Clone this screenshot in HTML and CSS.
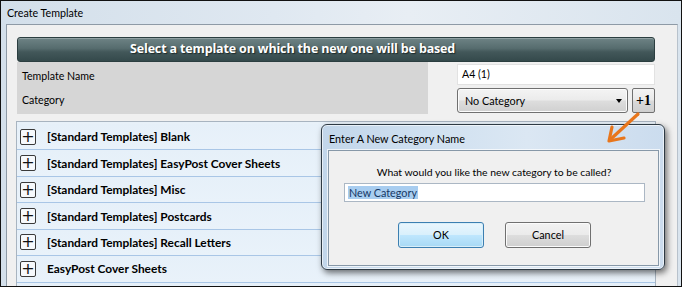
FILE: index.html
```html
<!DOCTYPE html>
<html>
<head>
<meta charset="utf-8">
<link rel="stylesheet" href="styles.css">
</head>
<body>
<div class="window">
  <div class="titlebar">Create Template</div>
  <div class="frame">
    <div class="header">Select a template on which the new one will be based</div>
    <div class="form">
      <div class="labels">
        <div class="label">Template Name</div>
        <div class="label">Category</div>
      </div>
      <div class="fields">
        <div class="input">A4 (1)</div>
        <div class="selrow">
          <div class="select"><span>No Category</span><span class="caret"></span></div>
          <div class="plus1">+1</div>
        </div>
      </div>
    </div>
    <div class="list">
      <div class="row"><span class="box">+</span><span class="name">[Standard Templates] Blank</span></div>
      <div class="row"><span class="box">+</span><span class="name">[Standard Templates] EasyPost Cover Sheets</span></div>
      <div class="row"><span class="box">+</span><span class="name">[Standard Templates] Misc</span></div>
      <div class="row"><span class="box">+</span><span class="name">[Standard Templates] Postcards</span></div>
      <div class="row"><span class="box">+</span><span class="name">[Standard Templates] Recall Letters</span></div>
      <div class="row"><span class="box">+</span><span class="name">EasyPost Cover Sheets</span></div>
      <div class="row"></div>
    </div>
  </div>

  <div class="dialog">
    <div class="dtitle">Enter A New Category Name</div>
    <div class="dpanel">
      <div class="question">What would you like the new category to be called?</div>
      <div class="dinput"><span class="sel">New Category</span></div>
      <div class="buttons">
        <div class="btn ok">OK</div>
        <div class="btn cancel">Cancel</div>
      </div>
    </div>
  </div>

  <svg class="arrow" width="50" height="50" viewBox="0 0 50 50">
    <line x1="36" y1="4" x2="10" y2="28" stroke="#e8761c" stroke-width="3.2" stroke-linecap="round"/>
    <polyline points="10,17 7,31 22,28" fill="none" stroke="#e8761c" stroke-width="3.2" stroke-linecap="round" stroke-linejoin="round"/>
  </svg>
</div>
</body>
</html>
```
FILE: styles.css
```css
* { box-sizing: border-box; }
html, body { margin: 0; padding: 0; }
body {
  width: 682px;
  height: 287px;
  overflow: hidden;
  font-family: Lato, "Open Sans", sans-serif;
  font-size: 10.6px;
  color: #000;
}
.window {
  position: relative;
  width: 682px;
  height: 287px;
  border: 1px solid #111;
  background: linear-gradient(90deg, #d3dfea 0%, #dfe8f1 40%, #e8eef4 60%, #d9e4ee 100%);
  overflow: hidden;
}
.titlebar {
  height: 23px;
  padding: 5px 0 0 6px;
  font-size: 10.7px;
  color: #000;
}
.frame {
  margin: 0 3px 0 5px;
  height: 270px;
  border-left: 1px solid #8e9aa6;
  border-top: 1px solid #8e9aa6;
  border-right: 1px solid #b8c2cc;
  background: #f0f0f0;
  padding: 12px 0 0 10px;
}
.header {
  width: 638px;
  height: 25px;
  border-radius: 3px;
  background: linear-gradient(180deg, #6e8385 0%, #566c6e 45%, #43585a 60%, #34494b 100%);
  border: 1px solid #2b3e40;
  box-shadow: inset 0 1px 0 rgba(255,255,255,0.25);
  color: #fff;
  font-family: "Open Sans", sans-serif;
  font-weight: 700;
  font-size: 12.5px;
  line-height: 22px;
  padding-left: 112px;
  text-shadow: 1px 1px 1px #1c2a2b;
  letter-spacing: -0.15px;
}
.form {
  display: flex;
  width: 638px;
  height: 52px;
}
.labels {
  width: 411px;
  background: #d6d6d6;
  padding: 4px 0 0 5px;
  display: flex;
  flex-direction: column;
}
.label {
  height: 26px;
  line-height: 21px;
  font-size: 10.6px;
}
.fields {
  flex: 1;
  padding: 2px 0 0 29px;
}
.input {
  width: 198px;
  height: 21px;
  background: #fff;
  border: 1px solid #e2e2e2;
  padding-left: 4px;
  line-height: 19px;
  font-size: 10.6px;
}
.selrow {
  display: flex;
  gap: 4px;
  margin-top: 3px;
}
.select {
  width: 171px;
  height: 25px;
  border: 1px solid #707070;
  border-radius: 3px;
  background: linear-gradient(180deg, #f4f4f4 0%, #ebebeb 48%, #dddddd 52%, #d0d0d0 100%);
  box-shadow: inset 0 0 0 1px #fcfcfc;
  display: flex;
  align-items: center;
  justify-content: space-between;
  padding: 0 5px 0 7px;
  font-size: 10.8px;
}
.caret {
  width: 0;
  height: 0;
  border-left: 3.5px solid transparent;
  border-right: 3.5px solid transparent;
  border-top: 4px solid #000;
}
.plus1 {
  width: 23px;
  height: 25px;
  border: 1px solid #707070;
  border-radius: 2px;
  background: linear-gradient(180deg, #f4f4f4 0%, #e9e9e9 48%, #d9d9d9 52%, #cfcfcf 100%);
  font-family: "Liberation Serif", serif;
  font-weight: 700;
  font-size: 14px;
  text-align: center;
  line-height: 23px;
}
.list {
  margin-top: 7px;
  margin-left: -1px;
  width: 640px;
  height: 200px;
  border: 1px solid #a8b4c0;
  border-bottom: none;
  background: #e8f1f9;
  padding-top: 2px;
}
.row {
  height: 26.45px;
  border-bottom: 1px solid #a9c6e6;
  background: linear-gradient(180deg, #e6f0f9 0%, #e9f2fa 100%);
  display: flex;
  align-items: center;
  padding-left: 3px;
}
.box {
  width: 16px;
  height: 16px;
  border: 1px solid #3a3a3a;
  border-radius: 2px;
  background: #f6f9fc;
  font-family: "DejaVu Sans", sans-serif;
  font-size: 16px;
  line-height: 13px;
  text-align: center;
  color: #111;
}
.name {
  margin-left: 11px;
  font-weight: 700;
  font-size: 11.9px;
  color: #000;
}
.dialog {
  position: absolute;
  left: 320px;
  top: 123px;
  width: 344px;
  height: 146px;
  border: 1px solid #2e3a44;
  border-radius: 6px;
  background: linear-gradient(90deg, #c2d6ea 0%, #cfe0f0 30%, #dbe7f3 60%, #cbdcee 100%);
  box-shadow: 2px 3px 6px rgba(0,0,0,0.55), inset 0 0 0 1px rgba(255,255,255,0.6);
  padding: 0 5px 0 6px;
}
.dtitle {
  height: 25px;
  line-height: 27px;
  font-size: 10.8px;
  padding-left: 1px;
}
.dpanel {
  height: 116px;
  border: 1px solid #8798a8;
  background: #f0f0f0;
  box-shadow: 0 0 0 1px rgba(255,255,255,0.7);
  padding: 13px 0 0 15px;
}
.question {
  width: 300px;
  text-align: center;
  font-size: 10.4px;
  line-height: 16px;
}
.dinput {
  margin-top: 3px;
  width: 301px;
  height: 19px;
  background: #fff;
  border: 1px solid #abb7c4;
  padding: 1px 0 0 3px;
  font-size: 10.8px;
  line-height: 15px;
}
.sel {
  background: #a8cdf0;
  color: #153764;
  padding: 0 1px;
}
.buttons {
  display: flex;
  gap: 21px;
  margin: 20px 0 0 54px;
}
.btn {
  width: 86px;
  height: 26px;
  border-radius: 3px;
  text-align: center;
  line-height: 24px;
  font-size: 10.8px;
}
.ok {
  border: 1px solid #3c7fb1;
  background: linear-gradient(180deg, #eaf6fd 0%, #d9f0fc 48%, #bee6fd 52%, #a7d9f5 100%);
  box-shadow: inset 0 0 0 1px #d7eef9;
}
.cancel {
  border: 1px solid #707070;
  background: linear-gradient(180deg, #f2f2f2 0%, #ebebeb 48%, #dddddd 52%, #cfcfcf 100%);
  box-shadow: inset 0 0 0 1px #fbfbfb;
}
.arrow {
  position: absolute;
  left: 601px;
  top: 109px;
}
```
